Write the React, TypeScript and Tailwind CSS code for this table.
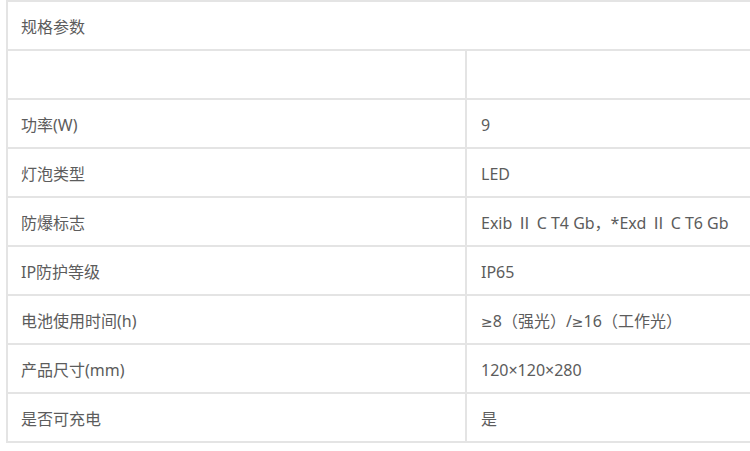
import React from "react";

const Ge = () => <span style={{ fontFamily: '"DejaVu Sans", sans-serif' }} className="text-[14px]">≥</span>;

const rows: [string, React.ReactNode][] = [
  ["", ""],
  ["功率(W)", "9"],
  ["灯泡类型", "LED"],
  ["防爆标志", "Exib Ⅱ C T4 Gb，*Exd Ⅱ C T6 Gb"],
  ["IP防护等级", "IP65"],
  [
    "电池使用时间(h)",
    <>
      <Ge />8（强光）/<Ge />16（工作光）
    </>,
  ],
  ["产品尺寸(mm)", "120×120×280"],
  ["是否可充电", "是"],
];

export default function App() {
  return (
    <div
      className="w-[750px] h-[451px] overflow-hidden bg-white text-[16px] text-[#5c5c5c]"
      style={{ fontFamily: '"Noto Sans", "Noto Sans CJK SC", sans-serif' }}
    >
      <div className="ml-[6px] w-[800px] border-l-2 border-t-2 border-[#e4e4e4]">
        <div className="flex h-[49px] items-center border-b-2 border-[#e4e4e4] pl-[13px] pt-[3px]">
          规格参数
        </div>
        {rows.map(([label, value], i) => (
          <div key={i} className="flex h-[49px] border-b-2 border-[#e4e4e4]">
            <div className="flex w-[459px] items-center border-r-2 border-[#e4e4e4] pl-[13px] pt-[3px]">
              {label}
            </div>
            <div className="flex flex-1 items-center pl-[14px] pt-[3px]">
              <span>{value}</span>
            </div>
          </div>
        ))}
      </div>
    </div>
  );
}
